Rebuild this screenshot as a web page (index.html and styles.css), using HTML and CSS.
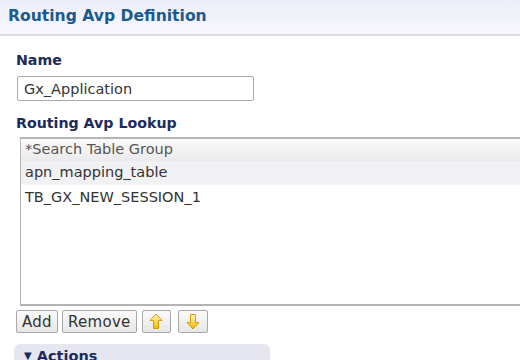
FILE: index.html
```html
<!DOCTYPE html>
<html>
    <head>
        <meta charset="utf-8">
        <title>Routing Avp Definition</title>
        <link rel="stylesheet" href="styles.css">
    </head>
    <body>
        <div class="header">
            <h1 class="title">Routing Avp Definition</h1>
        </div>
        <div class="content">
            <div class="label">Name</div>
            <input class="text-input" type="text" value="Gx_Application">

            <div class="label lookup-label">Routing Avp Lookup</div>
            <div class="lookup">
                <div class="lookup-head">*Search Table Group</div>
                <div class="lookup-row selected">apn_mapping_table</div>
                <div class="lookup-row">TB_GX_NEW_SESSION_1</div>
            </div>

            <div class="toolbar">
                <button class="btn">Add</button>
                <button class="btn">Remove</button>
                <button class="btn icon-btn" title="Move up">
                    <svg width="14" height="17" viewBox="0 0 14 17">
                        <defs>
                            <linearGradient id="gUp" x1="0" y1="0" x2="0" y2="1">
                                <stop offset="0" stop-color="#fff6c0"/>
                                <stop offset="1" stop-color="#f7b700"/>
                            </linearGradient>
                        </defs>
                        <path d="M7 1 L13 7.5 L9.5 7.5 L9.5 15.5 L4.5 15.5 L4.5 7.5 L1 7.5 Z" fill="url(#gUp)" stroke="#dc9c00" stroke-width="1" stroke-linejoin="round"/>
                    </svg>
                </button>
                <button class="btn icon-btn down-btn" title="Move down">
                    <svg width="14" height="17" viewBox="0 0 14 17">
                        <defs>
                            <linearGradient id="gDown" x1="0" y1="0" x2="0" y2="1">
                                <stop offset="0" stop-color="#fff6c0"/>
                                <stop offset="1" stop-color="#f7b700"/>
                            </linearGradient>
                        </defs>
                        <path d="M7 16 L13 9.5 L9.5 9.5 L9.5 1.5 L4.5 1.5 L4.5 9.5 L1 9.5 Z" fill="url(#gDown)" stroke="#dc9c00" stroke-width="1" stroke-linejoin="round"/>
                    </svg>
                </button>
            </div>

            <div class="actions">
                <span class="caret">&#9660;</span> Actions
            </div>
        </div>
    </body>
</html>
```

FILE: styles.css
```css
body {
    margin: 0px;
    font-family: "DejaVu Sans", Verdana, sans-serif;
    background-color: #fff;
    overflow: hidden;
}
.header {
    height: 34px;
    background-image: linear-gradient(to bottom, #ededf8, #f7f7fd);
    border-bottom: 2px solid #dcdce2;
    padding-left: 8px;
}
.title {
    margin: 0;
    font-size: 15.6px;
    line-height: 32px;
    font-weight: bold;
    color: #1c5a8c;
}
.content {
    padding-left: 16px;
    padding-top: 15px;
}
.label {
    font-size: 14.2px;
    font-weight: bold;
    color: #1d2b5c;
    line-height: 19px;
}
.text-input {
    display: block;
    margin: 6px 0 0 1px;
    width: 237px;
    height: 25px;
    box-sizing: border-box;
    border: 1px solid #a9a9a9;
    border-radius: 2px;
    padding: 0 6px;
    font-family: inherit;
    font-size: 14.5px;
    color: #333;
}
.lookup-label {
    margin-top: 13px;
}
.lookup {
    margin: 4px 0 0 4px;
    height: 169px;
    box-sizing: border-box;
    border-top: 2px solid #b4b4b4;
    border-bottom: 2px solid #b4b4b4;
    border-left: 1px solid #b4b4b4;
}
.lookup-head {
    height: 22px;
    line-height: 21px;
    padding-left: 4px;
    font-size: 14.5px;
    color: #555;
    background-image: linear-gradient(to bottom, #fafafa, #eaeaec);
}
.lookup-row {
    height: 25px;
    line-height: 24px;
    padding-left: 4px;
    font-size: 14.5px;
    color: #333;
}
.lookup-row.selected {
    height: 23px;
    line-height: 23px;
    background-color: #f1f1f3;
    border-bottom: 1px solid #f6f6f8;
}
.toolbar {
    display: flex;
    gap: 4px;
    margin-top: 4px;
}
.btn {
    height: 23px;
    padding: 0 5px;
    font-family: inherit;
    font-size: 15px;
    letter-spacing: 0.3px;
    color: #333;
    background-image: linear-gradient(to bottom, #fbfbfb, #e6e6e6);
    border: 1px solid #a8a8a8;
    border-radius: 2px;
}
.icon-btn {
    width: 29px;
    display: flex;
    align-items: center;
    justify-content: center;
    margin-left: 1px;
}
.down-btn {
    width: 30px;
    margin-left: 3px;
}
.actions {
    margin-top: 11px;
    margin-left: -2px;
    width: 246px;
    height: 24px;
    padding-left: 10px;
    border-radius: 6px 6px 0 0;
    background-color: #e6e6f0;
    font-size: 14.5px;
    font-weight: bold;
    color: #1d2b5c;
    line-height: 18px;
    padding-top: 3px;
}
.caret {
    font-size: 10px;
    vertical-align: 2px;
}
```
